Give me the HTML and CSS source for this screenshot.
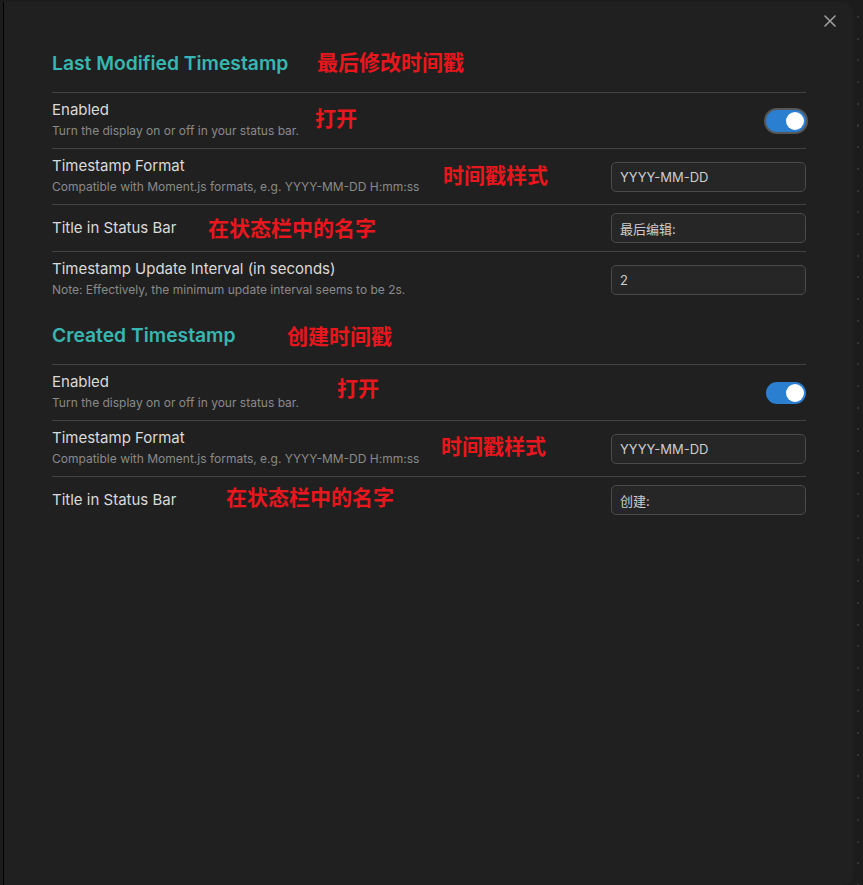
FILE: index.html
```html
<!DOCTYPE html>
<html lang="en">
<head>
<meta charset="utf-8">
<title>Settings</title>
<link rel="stylesheet" href="styles.css">
</head>
<body>
<div class="modal">
  <button class="close" aria-label="Close">
    <svg width="12" height="12" viewBox="0 0 12 12"><path d="M1 1L11 11M11 1L1 11" stroke="#a3a3a3" stroke-width="1.5" stroke-linecap="round"/></svg>
  </button>

  <section class="section">
    <h2 class="heading">Last Modified Timestamp<span class="note n-h1">最后修改时间戳</span></h2>
    <div class="row">
      <div class="info">
        <div class="name">Enabled</div>
        <div class="desc">Turn the display on or off in your status bar.</div>
      </div>
      <div class="toggle focused"><span class="knob"></span></div>
      <span class="note n-r1">打开</span>
    </div>
    <div class="row">
      <div class="info">
        <div class="name">Timestamp Format</div>
        <div class="desc">Compatible with Moment.js formats, e.g. YYYY-MM-DD H:mm:ss</div>
      </div>
      <input class="field" type="text" value="YYYY-MM-DD">
      <span class="note n-r2">时间戳样式</span>
    </div>
    <div class="row">
      <div class="info">
        <div class="name">Title in Status Bar</div>
      </div>
      <input class="field" type="text" value="最后编辑:">
      <span class="note n-r3">在状态栏中的名字</span>
    </div>
    <div class="row">
      <div class="info">
        <div class="name">Timestamp Update Interval (in seconds)</div>
        <div class="desc">Note: Effectively, the minimum update interval seems to be 2s.</div>
      </div>
      <input class="field" type="text" value="2">
    </div>
  </section>

  <section class="section second">
    <h2 class="heading">Created Timestamp<span class="note n-h2">创建时间戳</span></h2>
    <div class="row">
      <div class="info">
        <div class="name">Enabled</div>
        <div class="desc">Turn the display on or off in your status bar.</div>
      </div>
      <div class="toggle"><span class="knob"></span></div>
      <span class="note n-r4">打开</span>
    </div>
    <div class="row">
      <div class="info">
        <div class="name">Timestamp Format</div>
        <div class="desc">Compatible with Moment.js formats, e.g. YYYY-MM-DD H:mm:ss</div>
      </div>
      <input class="field" type="text" value="YYYY-MM-DD">
      <span class="note n-r5">时间戳样式</span>
    </div>
    <div class="row">
      <div class="info">
        <div class="name">Title in Status Bar</div>
      </div>
      <input class="field" type="text" value="创建:">
      <span class="note n-r6">在状态栏中的名字</span>
    </div>
  </section>
</div>
<div class="strip"></div>
</body>
</html>
```

FILE: styles.css
```css
* { box-sizing: border-box; }

html, body {
  margin: 0;
  height: 885px;
  overflow: hidden;
}

body {
  display: flex;
  padding-top: 2px;
  background: #1c1c1c;
  font-family: Inter, "Noto Sans CJK SC", sans-serif;
}

.modal {
  position: relative;
  width: 850px;
  height: 883px;
  margin-left: 3px;
  border-left: 1px solid #000;
  border-radius: 0 10px 10px 0;
  background: #202020;
  padding: 46px 47px 0 48px;
}

.strip {
  flex: 1;
  background-image: repeating-linear-gradient(to bottom, #333 0 2px, transparent 2px 21.7px);
  background-size: 2px 100%;
  background-repeat: no-repeat;
  background-position: 4px 14px;
}

.close {
  position: absolute;
  top: 11px;
  right: 15px;
  width: 16px;
  height: 16px;
  padding: 2px;
  border: 0;
  background: transparent;
  display: flex;
  align-items: center;
  justify-content: center;
}

.heading {
  position: relative;
  margin: 0;
  padding-bottom: 14px;
  font-size: 19.3px;
  line-height: 30px;
  font-weight: 600;
  color: #38b6b1;
  border-bottom: 1px solid #434343;
}

.second .heading {
  margin-top: 13px;
}

.row {
  position: relative;
  display: flex;
  align-items: center;
  padding: 8px 0;
  border-top: 1px solid #434343;
}

.heading + .row { border-top: 0; }

.info { flex: 1; }

.name {
  font-size: 15px;
  line-height: 18px;
  color: #dadada;
}

.desc {
  margin-top: 3px;
  font-size: 12px;
  line-height: 18px;
  color: #8a8a8a;
}

.toggle {
  position: relative;
  width: 40px;
  height: 22px;
  border-radius: 11px;
  background: #2b7fd0;
  flex: none;
}

.toggle.focused {
  box-shadow: 0 0 0 2px #575757;
}

.knob {
  position: absolute;
  top: 2px;
  right: 2px;
  width: 18px;
  height: 18px;
  border-radius: 50%;
  background: #fff;
}

.field {
  flex: none;
  width: 195px;
  height: 30px;
  padding: 0 8px;
  border: 1px solid #4a4a4a;
  border-radius: 5px;
  background: #262626;
  color: #cdcdcd;
  font-family: Inter, "Noto Sans CJK SC", sans-serif;
  font-size: 13px;
  outline: none;
}

.note {
  position: absolute;
  font-family: "Noto Sans CJK SC", sans-serif;
  font-weight: 700;
  font-size: 21px;
  line-height: 21px;
  color: #e8161d;
  white-space: nowrap;
}

.n-h1 { left: 265px; top: 3px; }
.n-r1 { left: 263px; top: 14px; }
.n-r2 { left: 391px; top: 14.5px; }
.n-r3 { left: 156px; top: 12px; }
.n-h2 { left: 235px; top: 5px; }
.n-r4 { left: 285px; top: 12px; }
.n-r5 { left: 389px; top: 14px; }
.n-r6 { left: 174px; top: 9px; }
```
